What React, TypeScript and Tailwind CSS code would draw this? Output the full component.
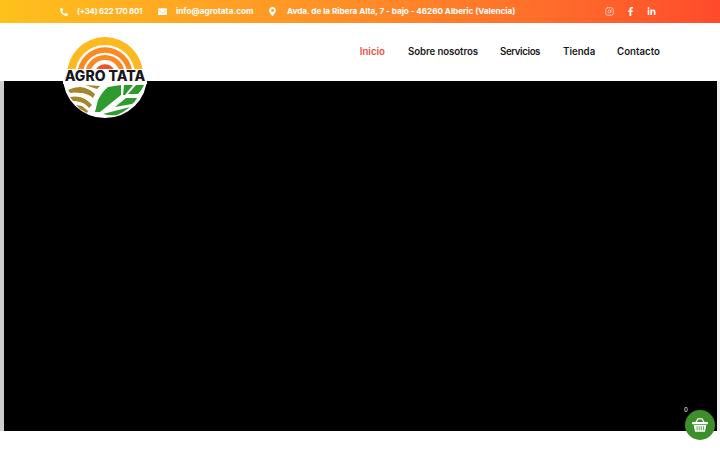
import { Instagram } from "lucide-react";
import { FaFacebookF, FaLinkedinIn, FaPhoneAlt, FaEnvelope, FaMapMarkerAlt } from "react-icons/fa";

function Logo() {
  const band = (R: number, r: number) => `M ${42 - R} 38 A ${R} ${R} 0 0 1 ${42 + R} 38 L ${42 + r} 38 A ${r} ${r} 0 0 0 ${42 - r} 38 Z`;
  return (
    <div className="absolute left-[63px] top-[37px] w-[84px] h-[81px] z-10">
      <svg viewBox="0 0 84 81" className="absolute inset-0 w-full h-full">
        <ellipse cx="42" cy="40" rx="42" ry="41" fill="#fff" />
        <path d={band(38, 30)} fill="#fdb91f" />
        <path d={band(27.7, 22.3)} fill="#fb8a22" />
        <path d={band(20, 15)} fill="#fb8a22" />
        <path d="M 31.3 38 A 10.7 10.7 0 0 1 52.7 38 Z" fill="#f0532d" />
        <rect x="0" y="32" width="84" height="15" fill="#fff" />
        <g fill="#a5862c">
          <path d="M22 48 L37 49 L34 52 L28 50 Z" />
          <path d="M5 53 Q11 50 17 50 Q26 51 32 57 L30 61 Q24 56 17 56 Q11 55 7 56 Z" />
          <path d="M7 60 Q12 59 17 60 Q24 62 29 68 L26 71 Q22 66 17 65 Q13 64 10 64 Z" />
          <path d="M13 68 L19 69 L25 74 L24 76 L17 72 Z" />
        </g>
        <g fill="#2f9a2d">
          <path d="M32 75 L35 63 Q39 55 45 50 L58 48 L58 58 L37 75 Z" />
          <path d="M61 48 L70 48 L62 58 L60 58 Z" />
          <path d="M73 48 L81 48 Q79 53 75 57 L65 57 Z" />
          <path d="M63 61 L74 61 Q72 65 69 67 L52 70 Z" />
          <path d="M40 77 L67 70 Q61 75 54 78 Q47 79 40 77 Z" />
        </g>
      </svg>
      <span className="absolute left-0 top-[33px] w-[84px] text-center text-[14px] leading-[12px] font-extrabold text-[#17171c] whitespace-nowrap">AGRO TATA</span>
    </div>
  );
}

export default function App() {
  return (
    <div className="relative w-[720px] h-[450px] overflow-hidden bg-white [font-family:Inter,sans-serif]">
      <div className="h-[23px] flex items-center bg-gradient-to-r from-[#fec11b] to-[#ff4a2c] text-white text-[8.2px] font-bold pl-[60px] pr-[64px]">
        <FaPhoneAlt className="w-[8px] h-[8px] mr-[9px]" />
        <span className="w-[66px] mr-[15px] whitespace-nowrap text-[7.8px] tracking-[-0.2px]">(+34) 622 170 801</span>
        <FaEnvelope className="w-[9px] h-[9px] mr-[9px]" />
        <span className="w-[78px] mr-[15px] whitespace-nowrap">info@agrotata.com</span>
        <FaMapMarkerAlt className="w-[7px] h-[9px] mr-[11px]" />
        <span className="w-[228px] whitespace-nowrap tracking-[-0.05px]">Avda. de la Ribera Alta, 7 - bajo - 46260 Alberic (Valencia)</span>
        <div className="ml-auto flex items-center gap-[12px]">
          <Instagram className="w-[9px] h-[9px] opacity-80" />
          <FaFacebookF className="w-[9px] h-[9px]" />
          <FaLinkedinIn className="w-[9px] h-[9px]" />
        </div>
      </div>
      <header className="h-[58px] flex items-center justify-end pr-[60px] gap-[23px] pt-[1px] text-[9.7px] font-semibold text-[#1a1a1a] whitespace-nowrap">
        <span className="text-[#ef4f3a]">Inicio</span>
        <span className="w-[69px] tracking-[-0.1px]">Sobre nosotros</span>
        <span className="w-[40px] tracking-[-0.4px]">Servicios</span>
        <span className="w-[31px]">Tienda</span>
        <span className="w-[43px]">Contacto</span>
      </header>
      <div className="h-[350px] flex">
        <div className="w-[4px] bg-[#cfcfcf]" />
        <div className="flex-1 bg-black" />
        <div className="w-[3px] bg-[#f0f0f0]" />
      </div>
      <Logo />
      <span className="absolute left-[684px] top-[405px] text-[6px] text-white">0</span>
      <div className="absolute left-[685px] top-[410px] w-[30px] h-[30px] rounded-full bg-[#3d8f2c] flex items-center justify-center">
        <svg viewBox="0 0 24 24" className="w-[20px] h-[20px]" fill="#fff">
          <path d="M7 9 L9.5 4.5 H14.5 L17 9" fill="none" stroke="#fff" strokeWidth="1.5" />
          <rect x="2.5" y="8.5" width="19" height="2.5" rx="0.6" />
          <path d="M4.5 12 H19.5 L18 20 H6 Z" />
          <path d="M8.5 13.5 V18.5 M11 13.5 V18.5 M13.5 13.5 V18.5 M16 13.5 V18.5" stroke="#3d8f2c" strokeWidth="1" />
        </svg>
      </div>
    </div>
  );
}
